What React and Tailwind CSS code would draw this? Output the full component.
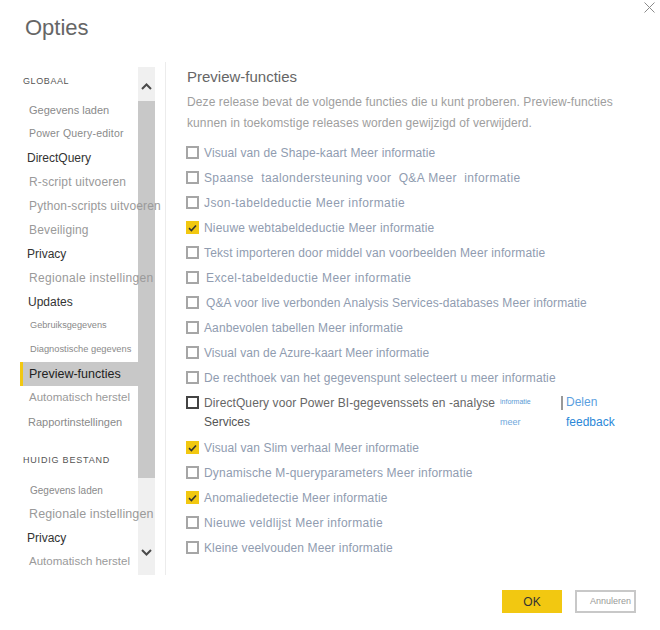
import React from 'react';

const rows = [
  { t: 'Visual van de Shape-kaart Meer informatie', tr: 'tracking-[0.1px]' },
  { t: 'Spaanse  taalondersteuning voor  Q&A Meer  informatie', tr: 'tracking-[0.36px]' },
  { t: 'Json-tabeldeductie Meer informatie', tr: 'tracking-[0.4px]' },
  { t: 'Nieuwe webtabeldeductie Meer informatie', tr: 'tracking-[0.18px]', checked: true },
  { t: 'Tekst importeren door middel van voorbeelden Meer informatie', tr: 'tracking-[0.13px]' },
  { t: 'Excel-tabeldeductie Meer informatie', tr: 'tracking-[0.4px]', gap: 'ml-[7px]' },
  { t: 'Q&A voor live verbonden Analysis Services-databases Meer informatie', tr: 'tracking-[0.08px]', gap: 'ml-[7px]' },
  { t: 'Aanbevolen tabellen Meer informatie', tr: 'tracking-[0.1px]' },
  { t: 'Visual van de Azure-kaart Meer informatie', tr: 'tracking-[0.05px]' },
  { t: 'De rechthoek van het gegevenspunt selecteert u meer informatie', tr: 'tracking-[0.11px]' },
];

const rowsAfter = [
  { t: 'Visual van Slim verhaal Meer informatie', tr: 'tracking-[0.1px]', checked: true },
  { t: 'Dynamische M-queryparameters Meer informatie', tr: 'tracking-[0.18px]' },
  { t: 'Anomaliedetectie Meer informatie', tr: 'tracking-[0.15px]', checked: true },
  { t: 'Nieuwe veldlijst Meer informatie', tr: 'tracking-[0.3px]' },
  { t: 'Kleine veelvouden Meer informatie', tr: 'tracking-[0.12px]' },
];

function Box({ checked, dark }) {
  if (checked) {
    return (
      <span className="w-[13px] h-[13px] bg-[#f2c811] flex items-center justify-center shrink-0">
        <svg width="9" height="8" viewBox="0 0 9 8">
          <path d="M1 4.2 L3.4 6.5 L8 1.5" fill="none" stroke="#333" strokeWidth="1.6" />
        </svg>
      </span>
    );
  }
  return (
    <span
      className={`w-[13px] h-[13px] border-2 bg-white shrink-0 ${dark ? 'border-[#444]' : 'border-[#a6a6a6]'}`}
    />
  );
}

function Row({ t, checked, tr, gap }) {
  return (
    <div className="h-[25px] flex items-center">
      <Box checked={checked} />
      <span className={`${gap || 'ml-[5px]'} text-[12px] text-[#909cb0] whitespace-pre ${tr}`}>{t}</span>
    </div>
  );
}

function Chevron({ down }) {
  return (
    <svg width="11" height="7" viewBox="0 0 11 7">
      <path
        d={down ? 'M1 1 L5.5 5.5 L10 1' : 'M1 6 L5.5 1.5 L10 6'}
        fill="none"
        stroke="#4a4a4a"
        strokeWidth="2"
      />
    </svg>
  );
}

export default function App() {
  return (
    <div className="relative w-[660px] h-[630px] bg-white font-['Liberation_Sans',Arial,sans-serif] overflow-hidden">
      {/* close */}
      <svg className="absolute left-[644px] top-[2px]" width="11" height="11" viewBox="0 0 11 11">
        <path d="M0.5 0.5 L10.5 10.5 M10.5 0.5 L0.5 10.5" stroke="#8a8a8a" strokeWidth="1" />
      </svg>

      <div className="pt-[15px] pl-[25px] text-[22px] leading-[26px] text-[#666]">Opties</div>

      <div className="mt-[21px] flex h-[513px]">
        {/* nav */}
        <div className="ml-[20px] w-[118px] pt-[8px] relative z-10 whitespace-nowrap">
          <div className="mt-[2px] h-[20px] flex items-center pl-[3px] text-[9px] tracking-[0.6px] text-[#555]">GLOBAAL</div>
          <div className="mt-[6px] h-[24px] flex items-center pl-[9px] text-[11px] text-[#8a8a8a]">Gegevens laden</div>
          <div className="h-[24px] flex items-center pl-[9px] text-[10.5px] tracking-[0.2px] text-[#8a8a8a]">Power Query-editor</div>
          <div className="h-[24px] flex items-center pl-[7px] text-[12px] text-[#333]">DirectQuery</div>
          <div className="h-[24px] flex items-center pl-[9px] text-[12px] tracking-[0.17px] text-[#9a9a9a]">R-script uitvoeren</div>
          <div className="h-[24px] flex items-center pl-[9px] text-[12px] tracking-[0.13px] text-[#9a9a9a]">Python-scripts uitvoeren</div>
          <div className="h-[24px] flex items-center pl-[9px] text-[12px] tracking-[0.15px] text-[#9a9a9a]">Beveiliging</div>
          <div className="h-[24px] flex items-center pl-[7px] text-[12px] text-[#333]">Privacy</div>
          <div className="h-[24px] flex items-center pl-[9px] text-[12px] tracking-[0.32px] text-[#9a9a9a]">Regionale instellingen</div>
          <div className="h-[24px] flex items-center pl-[8px] text-[12px] text-[#333]">Updates</div>
          <div className="h-[24px] flex items-center pl-[10px] text-[9.2px] text-[#8a8a8a]">Gebruiksgegevens</div>
          <div className="h-[24px] flex items-center pl-[10px] text-[9.3px] text-[#8a8a8a]">Diagnostische gegevens</div>
          <div className="h-[24px] flex items-center pl-[9px] text-[12.5px] text-[#222] bg-[#c8c8c8] border-l-[3px] border-[#f2c811]">
            <span className="-ml-[3px]">Preview-functies</span>
          </div>
          <div className="h-[24px] flex items-center pl-[9px] text-[11.5px] text-[#9a9a9a]">Automatisch herstel</div>
          <div className="h-[24px] flex items-center pl-[8px] text-[11px] text-[#8a8a8a]">Rapportinstellingen</div>
          <div className="mt-[17px] h-[20px] flex items-center pl-[3px] text-[9px] tracking-[0.8px] text-[#555]">HUIDIG BESTAND</div>
          <div className="mt-[7px] h-[24px] flex items-center pl-[10px] text-[10px] text-[#8a8a8a]">Gegevens laden</div>
          <div className="h-[24px] flex items-center pl-[9px] text-[12.5px] tracking-[0.1px] text-[#9a9a9a]">Regionale instellingen</div>
          <div className="h-[24px] flex items-center pl-[7px] text-[12px] text-[#333]">Privacy</div>
          <div className="h-[24px] flex items-center pl-[9px] text-[11.5px] text-[#9a9a9a]">Automatisch herstel</div>
        </div>

        {/* scrollbar */}
        <div className="mt-[5px] w-[17px] h-[508px] bg-[#f0f0f0] flex flex-col">
          <div className="h-[34px] flex items-center justify-center pt-[4px]">
            <Chevron />
          </div>
          <div className="h-[377px] bg-[#c8c8c8]" />
          <div className="flex-1 flex items-end justify-center pb-[19px]">
            <Chevron down />
          </div>
        </div>

        <div className="ml-[10px] w-px bg-[#ececec]" />

        {/* content */}
        <div className="ml-[21px] pt-[5px] flex-1">
          <div className="text-[15px] leading-[20px] text-[#666]">Preview-functies</div>
          <div className="mt-[5px] w-[450px] text-[12px] leading-[21px] tracking-[0.1px] text-[#9e9e9e]">
            Deze release bevat de volgende functies die u kunt proberen. Preview-functies kunnen in toekomstige releases worden gewijzigd of verwijderd.
          </div>
          <div className="mt-[6px] -ml-[1px]">
            {rows.map((r) => (
              <Row key={r.t} {...r} />
            ))}
            <div className="h-[45px] flex">
              <div className="w-[314px] pt-[6px]">
                <div className="h-[13px] flex items-center">
                  <Box dark />
                  <span className="ml-[5px] text-[12px] tracking-[0.1px] text-[#666] whitespace-nowrap">DirectQuery voor Power BI-gegevenssets en -analyse</span>
                </div>
                <div className="mt-[7px] pl-[18px] text-[12px] leading-[13px] text-[#555]">Services</div>
              </div>
              <div className="w-[61px] pt-[6px]">
                <div className="h-[13px] flex items-center text-[7px] text-[#5b9bd5]">informatie</div>
                <div className="mt-[7px] h-[13px] flex items-center text-[9px] text-[#6fa8dc]">meer</div>
              </div>
              <div className="pt-[6px] w-[5px]">
                <div className="w-[2px] h-[14px] bg-[#999]" />
              </div>
              <div className="pt-[5px]">
                <div className="h-[13px] flex items-center text-[12px] text-[#5ba0e0]">Delen</div>
                <div className="mt-[7px] h-[14px] flex items-center text-[12px] text-[#2b88d8]">feedback</div>
              </div>
            </div>
            {rowsAfter.map((r) => (
              <Row key={r.t} {...r} />
            ))}
          </div>
        </div>
      </div>

      <div className="mt-[15px] flex justify-end pr-[24px] gap-[13px]">
        <button className="w-[60px] h-[23px] bg-[#f2c811] text-[12px] text-[#333]">OK</button>
        <button className="w-[61px] h-[23px] border-2 border-[#c8c8c8] bg-white text-[9px] text-[#999] text-right pr-[3px]">Annuleren</button>
      </div>
    </div>
  );
}
